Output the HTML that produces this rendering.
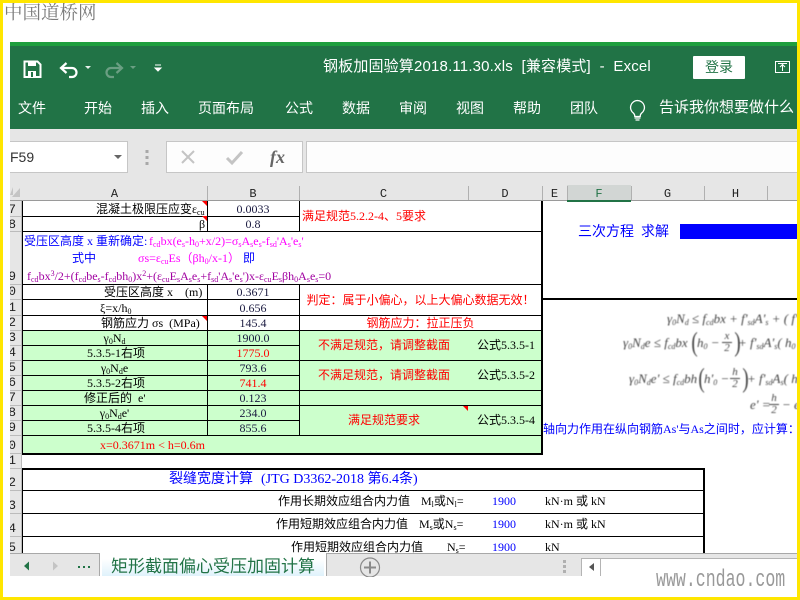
<!DOCTYPE html>
<html><head><meta charset="utf-8">
<style>
html,body{margin:0;padding:0;background:#fff}
#p{position:relative;width:800px;height:600px;overflow:hidden;background:#fff;font-family:"Liberation Serif","Noto Sans CJK SC",serif;font-size:12px;color:#000}
#p div{position:absolute;white-space:nowrap}
.r{font-family:"Liberation Sans","Noto Sans CJK SC",sans-serif;color:#fff;font-size:14px;line-height:20px;top:98px}
.h{font-family:"Liberation Mono",monospace;font-size:12px;line-height:16px;top:186px;text-align:center;color:#222}
.n{font-family:"Liberation Mono",monospace;font-size:13px;left:7px;width:9px;text-align:right;line-height:15px;color:#222}
.c{line-height:15px;text-align:center}
.b{left:207px;width:92px;color:#1a1a40}
.a{left:22px;width:185px}
.red{color:#f00}
.blue{color:#00f}
.mag{color:#f0f}
.pur{color:#a000a0}
sub{font-size:8px;line-height:0;vertical-align:-2px}
sup{font-size:8px;line-height:0;vertical-align:4px}
.m{font-family:"Liberation Serif",serif;font-style:italic;color:#444;font-size:13px;line-height:16px;filter:blur(.55px);white-space:pre}
.m span.f{position:absolute;font-size:11px;line-height:11px;text-align:center;width:10px;top:-4px}
.m span.f i{display:block;border-top:1px solid #444;font-style:italic}
.m span.p{position:absolute;top:-6px;font-size:27px;line-height:27px;font-style:normal;font-weight:300;transform:scaleX(.7)}
.tri{width:0;height:0;border-top:5px solid #f00;border-left:5px solid transparent}
</style></head><body><div id="p">

<div style="left:4px;top:0;font:400 18.5px/24px 'Noto Serif CJK SC',serif;color:#7c7c7c;letter-spacing:0">中国道桥网</div>

<!-- title bar -->
<div style="left:10px;top:42px;width:787px;height:4px;background:#1e9e3e"></div>
<div style="left:10px;top:46px;width:787px;height:83px;background:#217346"></div>

<svg style="position:absolute;left:0;top:0" width="800" height="130" fill="none">
<path d="M24.500 61.500h13l3 3v12.500h-16z" stroke="#fff" stroke-width="2"/>
<rect x="28" y="61" width="8" height="5" fill="#fff"/>
<rect x="28" y="71" width="8" height="6" fill="#fff"/><rect x="31" y="72" width="2" height="5" fill="#217346"/>
<path d="M62 68h10a4.500 4.500 0 0 1 0 9h-3" stroke="#fff" stroke-width="2.200"/>
<path d="M66.500 63l-5.500 5 5.500 5" stroke="#fff" stroke-width="2.200"/>
<path d="M85 66h6l-3 3z" fill="#e8f0ea"/>
<path d="M121 68h-10a4.500 4.500 0 0 0 0 9h3" stroke="#6b9f83" stroke-width="2.200"/>
<path d="M116.500 63l5.500 5-5.500 5" stroke="#6b9f83" stroke-width="2.200"/>
<path d="M130 66h6l-3 3z" fill="#6b9f83"/>
<path d="M155 65h6M155 68h6l-3 3z" stroke="#fff" fill="#fff"/>
<rect x="775.500" y="61.500" width="14" height="11" stroke="#fff"/>
<path d="M782.500 71v-6M780 67l2.500-2.500 2.500 2.500M778 63.500h9" stroke="#fff"/>
<path d="M637.500 100.500a7 7 0 0 0-4 12.700c1 1 1.300 2 1.300 3.300h5.400c0-1.300.3-2.300 1.300-3.300a7 7 0 0 0-4-12.700z" stroke="#fff" stroke-width="1.300"/>
<path d="M634.500 118h6M635.500 120h4" stroke="#fff" stroke-width="1.200"/>
</svg>

<div style="left:323px;top:57px;font:15px/20px 'Liberation Sans','Noto Sans CJK SC',sans-serif;color:#fff;white-space:pre;letter-spacing:.17px">钢板加固验算2018.11.30.xls  [兼容模式]  -  Excel</div>
<div style="left:693px;top:56px;width:52px;height:23px;background:#fff;border-radius:1px;color:#217346;font:14px/23px 'Liberation Sans','Noto Sans CJK SC',sans-serif;text-align:center">登录</div>

<div class="r" style="left:18px">文件</div>
<div class="r" style="left:84px">开始</div>
<div class="r" style="left:141px">插入</div>
<div class="r" style="left:198px">页面布局</div>
<div class="r" style="left:285px">公式</div>
<div class="r" style="left:342px">数据</div>
<div class="r" style="left:399px">审阅</div>
<div class="r" style="left:456px">视图</div>
<div class="r" style="left:513px">帮助</div>
<div class="r" style="left:570px">团队</div>
<div class="r" style="left:659px;font-size:15px;letter-spacing:0">告诉我你想要做什么</div>

<!-- formula bar -->
<div style="left:10px;top:129px;width:787px;height:56px;background:#e6e6e6"></div>
<div style="left:10px;top:141px;width:117px;height:30px;background:#fff;border:1px solid #c6c6c6;border-left:0"></div>
<div style="left:10px;top:148px;font:14px/18px 'Liberation Sans',sans-serif;color:#333">F59</div>
<div style="left:166px;top:141px;width:135px;height:30px;background:#fdfdfd;border:1px solid #c6c6c6"></div>
<div style="left:306px;top:141px;width:491px;height:30px;background:#fdfdfd;border:1px solid #c6c6c6;border-right:0"></div>
<svg style="position:absolute;left:0;top:140px" width="310" height="34" fill="none">
<path d="M114 15h8l-4 4z" fill="#666"/>
<rect x="145.500" y="10" width="3" height="3" fill="#a8a8a8"/><rect x="145.500" y="16" width="3" height="3" fill="#a8a8a8"/><rect x="145.500" y="22" width="3" height="3" fill="#a8a8a8"/>
<path d="M182 11l12 12M194 11l-12 12" stroke="#c4c4c4" stroke-width="2"/>
<path d="M227 18l5 5 10-11" stroke="#c4c4c4" stroke-width="3"/>
</svg>
<div style="left:270px;top:147px;font:italic bold 18px/20px 'Liberation Serif',serif;color:#666">fx</div>

<!-- column headers -->
<div style="left:10px;top:185px;width:787px;height:16px;background:#e6e6e6;border-bottom:1px solid #9a9a9a;box-sizing:border-box"></div>
<div style="left:567px;top:185px;width:64px;height:16px;background:#d2d6d4"></div>
<div style="left:567px;top:200px;width:64px;height:2px;background:#217346"></div>
<div style="left:10px;top:201px;width:12px;height:352px;background:#e6e6e6"></div>
<div class="h" style="left:22px;width:185px">A</div>
<div class="h" style="left:207px;width:92px">B</div>
<div class="h" style="left:299px;width:169px">C</div>
<div class="h" style="left:468px;width:74px">D</div>
<div class="h" style="left:542px;width:25px">E</div>
<div class="h" style="left:567px;width:64px;color:#217346">F</div>
<div class="h" style="left:631px;width:73px">G</div>
<div class="h" style="left:704px;width:63px">H</div>

<!-- green fill -->
<div style="left:22px;top:331px;width:520px;height:122px;background:#ccffcc"></div>

<!-- grid lines -->
<svg style="position:absolute;left:0;top:0" width="800" height="600" fill="none">
<g stroke="#b0b0b0"><path d="M207.500 186v14M299.500 186v14M468.500 186v14M542.500 186v14M567.500 186v14M631.500 186v14M704.500 186v14M767.500 186v14"/></g>
<g stroke="#bbb"><path d="M10 216.500h12M10 231.500h12M10 284.500h12M10 299.500h12M10 315.500h12M10 330.500h12M10 345.500h12M10 360.500h12M10 375.500h12M10 390.500h12M10 405.500h12M10 420.500h12M10 435.500h12M10 453.500h12M10 468.500h12M10 490.500h12M10 513.500h12M10 536.500h12"/>
<path d="M21.500 201v352"/></g>
<path d="M14 197v-8l-3 8h3z M21 199h-8l8-9z" fill="#c4c4c4" transform="translate(-1 -2)"/>
<g stroke="#000">
<path d="M22 216.500h277M22 231.500h520M22 284.500h520M22 299.500h277M22 315.500h520M22 330.500h520M22 345.500h277M22 360.500h520M22 375.500h277M22 390.500h520M22 405.500h520M22 420.500h277M22 435.500h520"/>
<path d="M22.500 201v252M207.500 201v30M299.500 201v30M207.500 284v151M299.500 284v151"/>
<path d="M22 490.500h682M22 513.500h682M22 536.500h682"/>
</g>
<g fill="#000">
<rect x="541" y="201" width="2" height="254"/>
<rect x="22" y="453" width="521" height="2"/>
<rect x="543" y="298" width="254" height="2"/>
<rect x="22" y="468" width="683" height="2"/>
<rect x="703" y="468" width="2" height="86"/>
</g>
<path d="M22.500 468v85" stroke="#000"/>
<rect x="680" y="224" width="117" height="15" fill="#00f"/>
</svg>

<!-- row numbers -->
<div class="n" style="top:202px">7</div>
<div class="n" style="top:217px">8</div>
<div class="n" style="top:269px">9</div>
<div class="n" style="top:284px">0</div>
<div class="n" style="top:300px">1</div>
<div class="n" style="top:315px">2</div>
<div class="n" style="top:330px">3</div>
<div class="n" style="top:345px">4</div>
<div class="n" style="top:360px">5</div>
<div class="n" style="top:375px">6</div>
<div class="n" style="top:390px">7</div>
<div class="n" style="top:405px">8</div>
<div class="n" style="top:420px">9</div>
<div class="n" style="top:438px">0</div>
<div class="n" style="top:453px">1</div>
<div class="n" style="top:475px">2</div>
<div class="n" style="top:498px">3</div>
<div class="n" style="top:521px">4</div>
<div class="n" style="top:540px">5</div>
<div style="left:3px;top:185px;width:7px;height:370px;background:#fff"></div>

<!-- rows 17,18 -->
<div class="c" style="left:96px;top:202px">混凝土极限压应变ε<sub>cu</sub></div>
<div class="c" style="left:199px;top:217px">β</div>
<div class="c b" style="top:202px">0.0033</div>
<div class="c b" style="top:217px">0.8</div>
<div class="tri" style="left:202px;top:201px"></div>
<div class="tri" style="left:202px;top:216px"></div>
<div class="c red" style="left:302px;top:209px">满足规范5.2.2-4、5要求</div>

<!-- merged 19 -->
<div class="c blue" style="left:24px;top:234px">受压区高度 x 重新确定:</div>
<div class="c mag" style="left:149px;top:234px">f<sub>cd</sub>bx(e<sub>s</sub>-h<sub>0</sub>+x/2)=σ<sub>s</sub>A<sub>s</sub>e<sub>s</sub>-f<sub>sd</sub>'A<sub>s</sub>'e<sub>s</sub>'</div>
<div class="c blue" style="left:72px;top:251px">式中</div>
<div class="c mag" style="left:138px;top:251px">σs=ε<sub>cu</sub>Es（βh<sub>0</sub>/x-1）</div>
<div class="c blue" style="left:243px;top:251px">即</div>
<div class="c pur" style="left:27px;top:269px">f<sub>cd</sub>bx<sup>3</sup>/2+(f<sub>cd</sub>be<sub>s</sub>-f<sub>cd</sub>bh<sub>0</sub>)x<sup>2</sup>+(ε<sub>cu</sub>E<sub>s</sub>A<sub>s</sub>e<sub>s</sub>+f<sub>sd</sub>'A<sub>s</sub>'e<sub>s</sub>')x-ε<sub>cu</sub>E<sub>s</sub>βh<sub>0</sub>A<sub>s</sub>e<sub>s</sub>=0</div>

<!-- rows 20-22 -->
<div class="c" style="left:104px;top:285px;white-space:pre">受压区高度 x    (m)</div>
<div class="c" style="left:100px;top:301px">ξ=x/h<sub>0</sub></div>
<div class="c" style="left:101px;top:316px;white-space:pre">钢筋应力 σs  (MPa)</div>
<div class="tri" style="left:202px;top:316px"></div>
<div class="c b" style="top:285px">0.3671</div>
<div class="c b" style="top:301px">0.656</div>
<div class="c b" style="top:316px">145.4</div>
<div class="c red" style="left:299px;width:243px;top:293px">判定：属于小偏心，以上大偏心数据无效！</div>
<div class="c red" style="left:299px;width:243px;top:316px">钢筋应力：拉正压负</div>

<!-- green rows -->
<div class="c a" style="top:331px;left:22px;width:185px;padding-right:0">γ<sub>0</sub>N<sub>d</sub></div>
<div class="c" style="left:87px;top:346px">5.3.5-1右项</div>
<div class="c a" style="top:361px">γ<sub>0</sub>N<sub>d</sub>e</div>
<div class="c" style="left:87px;top:376px">5.3.5-2右项</div>
<div class="c" style="left:84px;top:391px;white-space:pre">修正后的  e'</div>
<div class="c a" style="top:406px">γ<sub>0</sub>N<sub>d</sub>e'</div>
<div class="c" style="left:87px;top:421px">5.3.5-4右项</div>
<div class="c red" style="left:100px;top:438px">x=0.3671m &lt; h=0.6m</div>
<div class="c b" style="top:331px">1900.0</div>
<div class="c b red" style="top:346px;color:#f00">1775.0</div>
<div class="c b" style="top:361px">793.6</div>
<div class="c b red" style="top:376px;color:#f00">741.4</div>
<div class="c b" style="top:391px">0.123</div>
<div class="c b" style="top:406px">234.0</div>
<div class="c b" style="top:421px">855.6</div>
<div class="c red" style="left:318px;top:338px">不满足规范，请调整截面</div>
<div class="c red" style="left:318px;top:368px">不满足规范，请调整截面</div>
<div class="c red" style="left:348px;top:413px">满足规范要求</div>
<div class="c" style="left:477px;top:338px">公式5.3.5-1</div>
<div class="c" style="left:477px;top:368px">公式5.3.5-2</div>
<div class="c" style="left:477px;top:413px">公式5.3.5-4</div>
<div class="tri" style="left:463px;top:406px"></div>

<!-- right side -->
<div class="blue" style="left:578px;top:224px;font-size:14px;line-height:18px;white-space:pre">三次方程  求解</div>
<div style="left:543px;top:300px;width:254px;height:120px;overflow:hidden">
<div class="m" style="left:124px;top:11px">γ<sub>0</sub>N<sub>d</sub> ≤ f<sub>cd</sub>bx + f'<sub>sd</sub>A'<sub>s</sub> + ( f'<sub>pd</sub> −</div>
<div class="m" style="left:80px;top:35px;width:174px;height:16px">γ<sub>0</sub>N<sub>d</sub>e ≤ f<sub>cd</sub>bx<span class="p" style="left:67px">(</span><span style="position:absolute;left:74px;top:0">h<sub>0</sub> −</span><span class="f" style="left:99px">x<i>2</i></span><span class="p" style="left:110px">)</span><span style="position:absolute;left:115px;top:0">+ f'<sub>sd</sub>A'<sub>s</sub>( h<sub>0</sub> −</span></div>
<div class="m" style="left:86px;top:71px;width:168px;height:16px">γ<sub>0</sub>N<sub>d</sub>e' ≤ f<sub>cd</sub>bh<span class="p" style="left:68px">(</span><span style="position:absolute;left:75px;top:0">h'<sub>0</sub> −</span><span class="f" style="left:101px">h<i>2</i></span><span class="p" style="left:112px">)</span><span style="position:absolute;left:118px;top:0">+ f'<sub>sd</sub>A<sub>s</sub>( h',</span></div>
<div class="m" style="left:207px;top:97px;width:47px;height:16px">e' =<span class="f" style="left:19px">h<i>2</i></span><span style="position:absolute;left:32px;top:0">− e</span></div>
</div>
<div style="left:543px;top:422px;width:254px;overflow:hidden;color:#00f;line-height:15px">轴向力作用在纵向钢筋As'与As之间时，应计算：</div>

<!-- crack section -->
<div class="c blue" style="left:169px;top:472px;font-size:14px">裂缝宽度计算</div>
<div class="c blue" style="left:261px;top:472px;font-size:14px">(JTG D3362-2018 第6.4条)</div>
<div class="c" style="left:278px;top:494px">作用长期效应组合内力值</div>
<div class="c" style="left:276px;top:517px">作用短期效应组合内力值</div>
<div class="c" style="left:291px;top:540px">作用短期效应组合内力值</div>
<div class="c" style="left:421px;top:494px">M<sub>l</sub>或N<sub>l</sub>=</div>
<div class="c" style="left:419px;top:517px">M<sub>s</sub>或N<sub>s</sub>=</div>
<div class="c" style="left:447px;top:540px">N<sub>s</sub>=</div>
<div class="c blue" style="left:492px;top:494px">1900</div>
<div class="c blue" style="left:492px;top:517px">1900</div>
<div class="c blue" style="left:492px;top:540px">1900</div>
<div class="c" style="left:545px;top:494px">kN·m 或 kN</div>
<div class="c" style="left:545px;top:517px">kN·m 或 kN</div>
<div class="c" style="left:545px;top:540px">kN</div>

<!-- tab bar -->
<div style="left:10px;top:553px;width:787px;height:23px;background:#e6e6e6"></div>
<div style="left:10px;top:553px;width:90px;height:1px;background:#a8a8a8"></div>
<div style="left:99px;top:553px;width:1px;height:23px;background:#a8a8a8"></div>
<div style="left:100px;top:553px;width:226px;height:23px;background:#fff"></div>
<div style="left:102px;top:559px;width:222px;height:17px;background:linear-gradient(#fff,#dff2fb)"></div>
<div style="left:326px;top:553px;width:471px;height:1px;background:#a8a8a8"></div>
<div style="left:326px;top:553px;width:1px;height:23px;background:#a8a8a8"></div>
<div style="left:111px;top:553px;font:17px/23px 'Noto Sans CJK SC',sans-serif;color:#217346">矩形截面偏心受压加固计算</div>
<svg style="position:absolute;left:0;top:553px" width="800" height="24" fill="none">
<path d="M29 8.500v9l-5-4.500z" fill="#217346"/>
<path d="M53 8.500v9l5-4.500z" fill="#c4c4c4"/>
<rect x="78" y="13" width="2" height="2" fill="#217346"/><rect x="83" y="13" width="2" height="2" fill="#217346"/><rect x="88" y="13" width="2" height="2" fill="#217346"/>
<circle cx="370" cy="14.500" r="9.500" stroke="#8a8a8a" stroke-width="1.200"/>
<path d="M364 14.500h12M370 8.500v12" stroke="#8a8a8a" stroke-width="2"/>
<rect x="563" y="7" width="3" height="3" fill="#b0b0b0"/><rect x="563" y="12" width="3" height="3" fill="#b0b0b0"/><rect x="563" y="17" width="3" height="3" fill="#b0b0b0"/>
<rect x="581" y="5" width="216" height="18" fill="#fff"/>
<path d="M581.500 5v18M600.500 5v18M581 5.500h216" stroke="#b4b4b4"/>
<path d="M594 10v8l-5-4z" fill="#555"/>
</svg>

<!-- watermark -->
<div style="left:656px;top:569px;font:24px/24px 'Liberation Mono',monospace;color:#999;transform:scaleX(.69);transform-origin:0 0">www.cndao.com</div>

<!-- yellow frame -->
<div style="left:0;top:0;width:800px;height:3px;background:#ffe600"></div>
<div style="left:0;top:0;width:3px;height:600px;background:#ffe600"></div>
<div style="left:797px;top:0;width:3px;height:600px;background:#ffe600"></div>
<div style="left:0;top:597px;width:800px;height:3px;background:#ffe600"></div>

</div></body></html>
